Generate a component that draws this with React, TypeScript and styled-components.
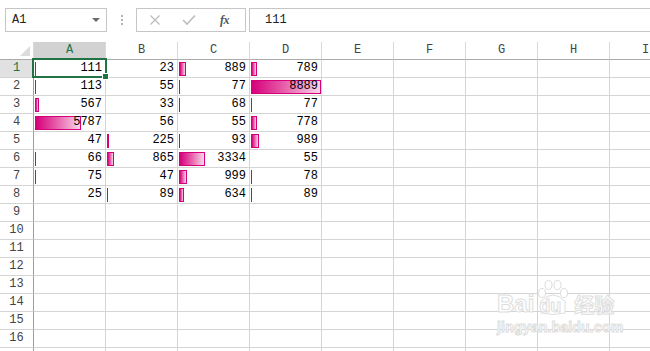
import React from 'react';
import styled, { createGlobalStyle, css } from 'styled-components';

const GREEN = '#217346';
const GRID = '#d4d4d4';
const MONO = '"Liberation Mono", "DejaVu Sans Mono", monospace';

const COLUMNS = ['A', 'B', 'C', 'D', 'E', 'F', 'G', 'H', 'I'];
const ROW_COUNT = 16;
const DATA = [
  [111, 23, 889, 789],
  [113, 55, 77, 8889],
  [567, 33, 68, 77],
  [5787, 56, 55, 778],
  [47, 225, 93, 989],
  [66, 865, 3334, 55],
  [75, 47, 999, 78],
  [25, 89, 634, 89],
];
const BAR_MAX = 8889;
const BAR_SPAN = 70;

const GlobalStyle = createGlobalStyle`
  html, body {
    margin: 0;
    padding: 0;
    background: #fff;
    overflow: hidden;
  }
  body {
    font-family: ${MONO};
  }
`;

const Window = styled.div`
  position: relative;
  width: 650px;
  height: 351px;
  overflow: hidden;
  background: #fff;
`;

const FormulaBar = styled.div`
  display: flex;
  align-items: flex-start;
  height: 42px;
  padding: 8px 0 0 5px;
  box-sizing: border-box;
`;

const NameBox = styled.div`
  display: flex;
  align-items: center;
  justify-content: space-between;
  width: 102px;
  height: 24px;
  box-sizing: border-box;
  border: 1px solid #c6c6c6;
  padding: 0 6px 0 6px;
  font: 12px ${MONO};
  color: #222;
`;

const Caret = styled.span`
  width: 0;
  height: 0;
  border-left: 4px solid transparent;
  border-right: 4px solid transparent;
  border-top: 4px solid #6a6a6a;
`;

const Dots = styled.div`
  display: flex;
  flex-direction: column;
  gap: 2px;
  margin: 7px 13px 0 14px;
  span {
    width: 2px;
    height: 2px;
    background: #b4b4b4;
  }
`;

const FxBox = styled.div`
  display: flex;
  align-items: center;
  width: 110px;
  height: 24px;
  box-sizing: border-box;
  border: 1px solid #c6c6c6;
  padding-left: 12px;
`;

const IconSlot = styled.span<{ $w: number }>`
  display: inline-flex;
  width: ${({ $w }) => $w}px;
`;

const Fx = styled.span`
  font: italic bold 12px "Liberation Serif", serif;
  color: #555;
  letter-spacing: -0.5px;
`;

const FormulaInput = styled.div`
  flex: 1;
  height: 24px;
  margin-left: 3px;
  box-sizing: border-box;
  border: 1px solid #c6c6c6;
  border-right: none;
  padding-left: 15px;
  font: 12px/22px ${MONO};
  color: #222;
`;

const Sheet = styled.div`
  display: grid;
  grid-template-columns: 34px repeat(9, 72px);
  grid-auto-rows: 18px;
`;

const Corner = styled.div`
  position: relative;
  box-sizing: border-box;
  border-bottom: 1px solid #ababab;
  border-right: 1px solid #dadada;
  &::after {
    content: '';
    position: absolute;
    right: 3px;
    bottom: 3px;
    border-left: 10px solid transparent;
    border-bottom: 10px solid #dcdcdc;
  }
`;

const ColHeader = styled.div<{ $active?: boolean }>`
  box-sizing: border-box;
  border-right: 1px solid #dadada;
  border-bottom: 1px solid #ababab;
  text-align: center;
  font: 12px/17px ${MONO};
  color: #444;
  ${({ $active }) =>
    $active &&
    css`
      background: #d2d2d2;
      color: ${GREEN};
      border-bottom: 2px solid ${GREEN};
      line-height: 16px;
    `}
`;

const RowHeader = styled.div<{ $active?: boolean }>`
  box-sizing: border-box;
  border-right: 1px solid #9e9e9e;
  border-bottom: 1px solid ${GRID};
  text-align: center;
  font: 12px/17px ${MONO};
  color: #444;
  ${({ $active }) =>
    $active &&
    css`
      background: #e1e1e1;
      color: ${GREEN};
    `}
`;

const Cell = styled.div`
  position: relative;
  box-sizing: border-box;
  border-right: 1px solid ${GRID};
  border-bottom: 1px solid ${GRID};
  padding-right: 3px;
  text-align: right;
  font: 12px/17px ${MONO};
  color: #000;
`;

const Value = styled.span`
  position: relative;
  z-index: 1;
`;

const DataBar = styled.div<{ $thin: boolean }>`
  position: absolute;
  left: 1px;
  top: 2px;
  bottom: 1px;
  box-sizing: border-box;
  ${({ $thin }) =>
    $thin
      ? css`
          background: #d6007b;
        `
      : css`
          border: 1px solid #d6007b;
          background: linear-gradient(to right, #d6007b 0%, #e65aa8 45%, #f8d6e9 100%);
        `}
`;

const Selection = styled.div`
  position: absolute;
  top: -2px;
  left: -2px;
  right: -2px;
  bottom: -1px;
  border: 2px solid ${GREEN};
  z-index: 2;
  pointer-events: none;
`;

const FillHandle = styled.div`
  position: absolute;
  right: -4px;
  bottom: -4px;
  width: 5px;
  height: 5px;
  background: ${GREEN};
  border: 1px solid #fff;
`;

const Watermark = styled.div`
  position: absolute;
  left: 497px;
  top: 279px;
  display: flex;
  flex-direction: column;
  align-items: flex-start;
  color: #fff;
  font-family: "Liberation Sans", Arial, sans-serif;
  -webkit-text-stroke: 1px #dedede;
  pointer-events: none;
`;

const BrandRow = styled.div`
  display: flex;
  align-items: flex-end;
  font-size: 24px;
  font-weight: bold;
  line-height: 22px;
`;

const Paw = styled.span`
  position: relative;
  display: inline-flex;
  width: 36px;
  height: 36px;
  margin: 0 1px;
  span {
    position: absolute;
    left: 4px;
    bottom: 0;
    font-size: 18px;
    line-height: 18px;
  }
`;

const Jingyan = styled.span`
  font-family: "Noto Sans CJK SC", sans-serif;
  font-size: 20px;
  line-height: 20px;
  margin-left: 2px;
`;

const Domain = styled.div`
  margin-top: 4px;
  font-size: 14px;
  font-weight: bold;
  letter-spacing: 0.2px;
`;

const XIcon = () => (
  <svg width="12" height="12" viewBox="0 0 12 12">
    <path d="M1.5 1.5 L10.5 10.5 M10.5 1.5 L1.5 10.5" stroke="#bdbdbd" strokeWidth="1.3" fill="none" />
  </svg>
);

const CheckIcon = () => (
  <svg width="14" height="12" viewBox="0 0 14 12">
    <path d="M1 6 L5 10 L13 1.5" stroke="#bdbdbd" strokeWidth="1.6" fill="none" />
  </svg>
);

const PawIcon = () => (
  <svg width="36" height="36" viewBox="0 0 36 36">
    <g fill="#fff" stroke="#dedede" strokeWidth="1">
      <ellipse cx="7" cy="14" rx="3.5" ry="4.5" />
      <ellipse cx="13.5" cy="6" rx="3.5" ry="4.5" />
      <ellipse cx="22.5" cy="6" rx="3.5" ry="4.5" />
      <ellipse cx="29" cy="14" rx="3.5" ry="4.5" />
      <path d="M6 22 Q18 10 30 22 L30 34 Q18 37 6 34 Z" />
    </g>
  </svg>
);

const barWidth = (v: number) => Math.round((v / BAR_MAX) * BAR_SPAN);

const App = () => {
  // one extra blank row so the grid runs to the bottom edge
  const rows = Array.from({ length: ROW_COUNT + 1 }, (_, i) => i);

  return (
    <>
      <GlobalStyle />
      <Window>
        <FormulaBar>
          <NameBox>
            <span>A1</span>
            <Caret />
          </NameBox>
          <Dots>
            <span />
            <span />
            <span />
          </Dots>
          <FxBox>
            <IconSlot $w={33}>
              <XIcon />
            </IconSlot>
            <IconSlot $w={38}>
              <CheckIcon />
            </IconSlot>
            <Fx>fx</Fx>
          </FxBox>
          <FormulaInput>111</FormulaInput>
        </FormulaBar>

        <Sheet>
          <Corner />
          {COLUMNS.map((c, i) => (
            <ColHeader key={c} $active={i === 0}>
              {c}
            </ColHeader>
          ))}
          {rows.map((r) => (
            <React.Fragment key={r}>
              <RowHeader $active={r === 0}>{r < ROW_COUNT ? r + 1 : ''}</RowHeader>
              {COLUMNS.map((c, ci) => {
                const v = DATA[r]?.[ci];
                const w = v !== undefined ? barWidth(v) : 0;
                return (
                  <Cell key={c}>
                    {w > 0 && <DataBar $thin={w < 3} style={{ width: w }} />}
                    {v !== undefined && <Value>{v}</Value>}
                    {r === 0 && ci === 0 && (
                      <Selection>
                        <FillHandle />
                      </Selection>
                    )}
                  </Cell>
                );
              })}
            </React.Fragment>
          ))}
        </Sheet>

        <Watermark>
          <BrandRow>
            Bai
            <Paw>
              <PawIcon />
              <span>du</span>
            </Paw>
            <Jingyan>经验</Jingyan>
          </BrandRow>
          <Domain>jingyan.baidu.com</Domain>
        </Watermark>
      </Window>
    </>
  );
};

export default App;
